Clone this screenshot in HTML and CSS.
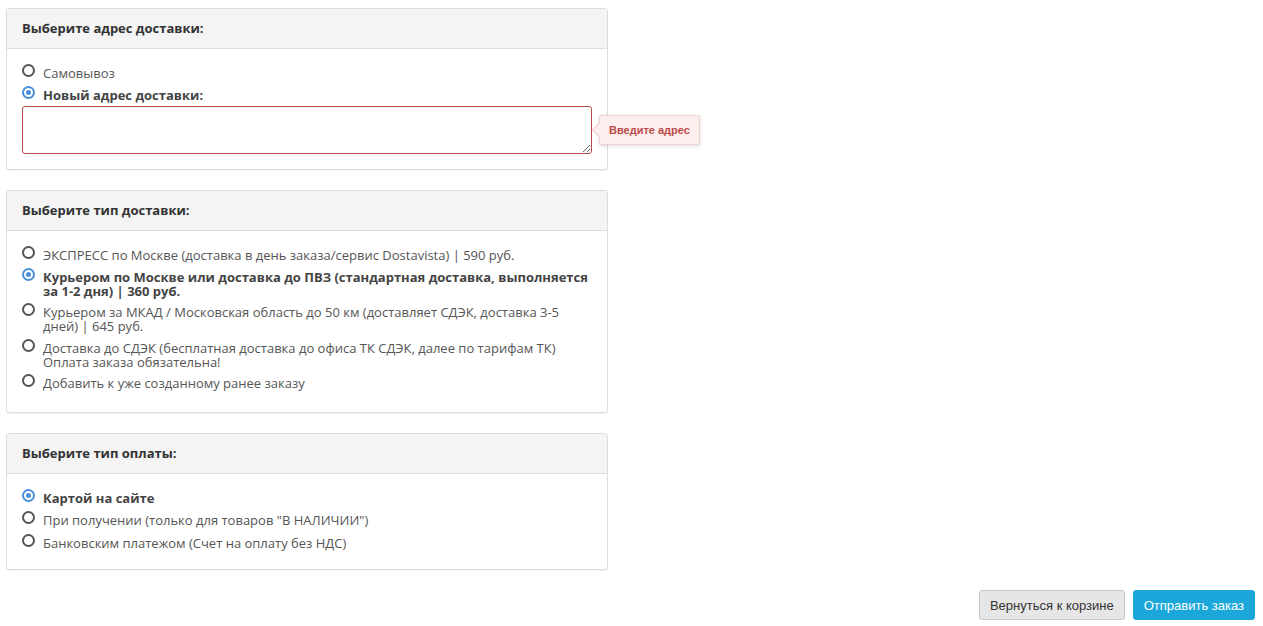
FILE: index.html
```html
<!DOCTYPE html>
<html>
<head>
  <meta charset="utf-8">
  <link rel="stylesheet" href="styles.css">
</head>
<body>
  <div class="page">
    <div class="panel">
      <div class="panel-head">Выберите адрес доставки:</div>
      <div class="panel-body">
        <label class="opt"><span class="radio"></span><span>Самовывоз</span></label>
        <label class="opt opt-tight checked"><span class="radio"></span><span>Новый адрес доставки:</span></label>
        <div class="addr">
          <textarea class="addr-input"></textarea>
          <div class="tip">Введите адрес</div>
        </div>
      </div>
    </div>

    <div class="panel">
      <div class="panel-head">Выберите тип доставки:</div>
      <div class="panel-body ship">
        <label class="opt"><span class="radio"></span><span>ЭКСПРЕСС по Москве (доставка в день заказа/сервис Dostavista) | 590 руб.</span></label>
        <label class="opt checked"><span class="radio"></span><span>Курьером по Москве или доставка до ПВЗ (стандартная доставка, выполняется за 1-2 дня) | 360 руб.</span></label>
        <label class="opt"><span class="radio"></span><span>Курьером за МКАД / Московская область до 50 км (доставляет СДЭК, доставка 3-5 дней) | 645 руб.</span></label>
        <label class="opt"><span class="radio"></span><span>Доставка до СДЭК (бесплатная доставка до офиса ТК СДЭК, далее по тарифам ТК) Оплата заказа обязательна!</span></label>
        <label class="opt"><span class="radio"></span><span>Добавить к уже созданному ранее заказу</span></label>
      </div>
    </div>

    <div class="panel">
      <div class="panel-head">Выберите тип оплаты:</div>
      <div class="panel-body pay">
        <label class="opt checked"><span class="radio"></span><span>Картой на сайте</span></label>
        <label class="opt"><span class="radio"></span><span>При получении (только для товаров "В НАЛИЧИИ")</span></label>
        <label class="opt"><span class="radio"></span><span>Банковским платежом (Счет на оплату без НДС)</span></label>
      </div>
    </div>

    <div class="actions">
      <button class="btn btn-back">Вернуться к корзине</button>
      <button class="btn btn-send">Отправить заказ</button>
    </div>
  </div>
</body>
</html>
```

FILE: styles.css
```css
body {
  margin: 0;
  font-family: 'Open Sans', 'Noto Sans', sans-serif;
  font-size: 13px;
  color: #555;
  background: #fff;
}
.page {
  padding: 8px 8px 0 6px;
}
.panel {
  width: 602px;
  box-sizing: border-box;
  border: 1px solid #ddd;
  border-radius: 3px;
  box-shadow: 0 1px 1px rgba(0, 0, 0, 0.05);
  margin-bottom: 20px;
  background: #fff;
}
.panel-head {
  height: 39px;
  line-height: 39px;
  padding: 0 15px;
  background: #f4f4f4;
  border-bottom: 1px solid #ddd;
  border-radius: 3px 3px 0 0;
  font-weight: bold;
  color: #333;
}
.panel-body {
  padding: 17px 15px 15px;
}
.panel-body.ship {
  padding-bottom: 14px;
}
.panel-body.pay {
  padding-bottom: 11px;
}
.opt {
  display: flex;
  align-items: flex-start;
  gap: 8px;
  line-height: 14px;
  margin-bottom: 7.5px;
  padding-right: 4px;
}
.pay .opt {
  margin-bottom: 8.5px;
}
.opt-tight {
  margin-bottom: 4.5px;
}
.opt.checked {
  font-weight: bold;
  color: #444;
}
.radio {
  flex: none;
  width: 9px;
  height: 9px;
  margin-top: -2px;
  border: 2px solid #555;
  border-radius: 50%;
  background: #fff;
  position: relative;
}
.opt.checked .radio {
  border-color: #4a8fd9;
}
.opt.checked .radio::after {
  content: "";
  position: absolute;
  left: 2px;
  top: 2px;
  width: 5px;
  height: 5px;
  border-radius: 50%;
  background: #4a8fd9;
}
.addr {
  position: relative;
}
.addr-input {
  display: block;
  width: 570px;
  height: 48px;
  box-sizing: border-box;
  border: 1px solid #b94a48;
  border-radius: 3px;
  margin: 0;
  resize: vertical;
  font-family: inherit;
}
.tip {
  position: absolute;
  left: 577px;
  top: 9px;
  height: 28px;
  line-height: 28px;
  padding: 0 9px;
  background: #fdeeee;
  border: 1px solid #f1d0d0;
  border-radius: 2px;
  box-shadow: 0 1px 4px rgba(0, 0, 0, 0.15);
  font-family: 'Liberation Sans', Arial, sans-serif;
  font-size: 11px;
  font-weight: bold;
  color: #b94a48;
  white-space: nowrap;
}
.tip::before {
  content: "";
  position: absolute;
  left: -6px;
  top: 9px;
  width: 9px;
  height: 9px;
  background: #fdeeee;
  border-left: 1px solid #f1d0d0;
  border-bottom: 1px solid #f1d0d0;
  transform: rotate(45deg);
}
.actions {
  display: flex;
  justify-content: flex-end;
  gap: 8px;
}
.btn {
  height: 30px;
  padding: 0 10px;
  border-radius: 3px;
  font-family: 'Liberation Sans', Arial, sans-serif;
  font-size: 13px;
  cursor: pointer;
}
.btn-back {
  background: #e6e6e6;
  border: 1px solid #c8c8c8;
  color: #333;
}
.btn-send {
  background: #1ba7da;
  border: 1px solid #1ba7da;
  color: #fff;
}
```
